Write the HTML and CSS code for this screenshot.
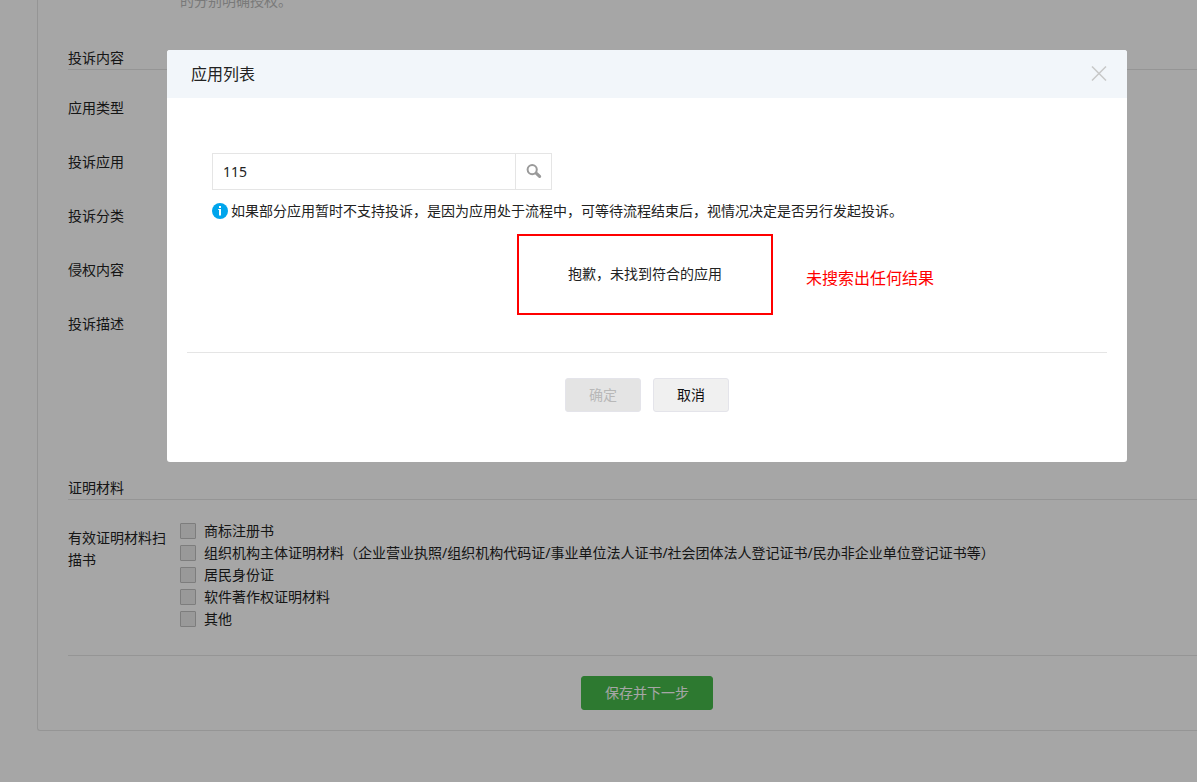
FILE: index.html
```html
<!DOCTYPE html>
<html lang="zh-CN">
<head>
<meta charset="utf-8">
<title>应用列表</title>
<link rel="stylesheet" href="styles.css">
</head>
<body>
<main class="panel">
  <p class="hint">的分别明确授权。</p>

  <section class="section">
    <h2 class="section-title">投诉内容</h2>
    <div class="rows">
      <div class="row">应用类型</div>
      <div class="row">投诉应用</div>
      <div class="row">投诉分类</div>
      <div class="row">侵权内容</div>
      <div class="row row-tall">投诉描述</div>
    </div>
  </section>

  <section class="section">
    <h2 class="section-title">证明材料</h2>
    <div class="proof">
      <div class="proof-label" id="proof-label">有效证明材料扫描书</div>
      <div class="checks" role="group" aria-labelledby="proof-label">
        <label class="check"><input class="check-box" type="checkbox">商标注册书</label>
        <label class="check"><input class="check-box" type="checkbox">组织机构主体证明材料（企业营业执照/组织机构代码证/事业单位法人证书/社会团体法人登记证书/民办非企业单位登记证书等）</label>
        <label class="check"><input class="check-box" type="checkbox">居民身份证</label>
        <label class="check"><input class="check-box" type="checkbox">软件著作权证明材料</label>
        <label class="check"><input class="check-box" type="checkbox">其他</label>
      </div>
    </div>
  </section>

  <div class="page-actions">
    <button class="btn btn-primary" type="button">保存并下一步</button>
  </div>
</main>

<div class="overlay">
  <div class="dialog" role="dialog" aria-modal="true" aria-labelledby="dialog-title">
    <header class="dialog-head">
      <h1 class="dialog-title" id="dialog-title">应用列表</h1>
      <button class="close" type="button" aria-label="关闭">
        <svg width="16" height="16" viewBox="0 0 16 16" fill="none" stroke="#c8c8c8" stroke-width="1.5"><path d="M1 .5l14 14M15 .5L1 14.5"/></svg>
      </button>
    </header>
    <div class="dialog-body">
      <form class="search">
        <input class="search-input" type="text" value="115" aria-label="搜索应用">
        <button class="search-btn" type="button" aria-label="搜索">
          <svg width="16" height="16" viewBox="0 0 16 16" fill="none" stroke="#9a9a9a"><circle cx="6.2" cy="5.6" r="4.6" stroke-width="2"/><path d="M10.4 9.4l3.2 3" stroke-width="3.2" stroke-linecap="round"/></svg>
        </button>
      </form>
      <p class="notice">
        <svg class="notice-icon" width="16" height="16" viewBox="0 0 16 16"><circle cx="8" cy="8" r="8" fill="#00a5ec"/><path d="M7 3h2v2H7zM6.2 6H9v6.5H7V7h-.8z" fill="#fff"/></svg>
        <span>如果部分应用暂时不支持投诉，是因为应用处于流程中，可等待流程结束后，视情况决定是否另行发起投诉。</span>
      </p>
      <div class="result">
        <p class="empty">抱歉，未找到符合的应用</p>
        <p class="remark">未搜索出任何结果</p>
      </div>
    </div>
    <footer class="dialog-foot">
      <button class="btn btn-disabled" type="button" disabled>确定</button>
      <button class="btn btn-plain" type="button">取消</button>
    </footer>
  </div>
</div>
</body>
</html>
```
FILE: styles.css
```css
* {
  box-sizing: border-box;
}

body {
  margin: 0;
  min-height: 100vh;
  overflow: hidden;
  background: #fff;
  color: #222;
  font: 14px/22px "Noto Sans", "Noto Sans CJK SC", sans-serif;
}

h1, h2, p {
  margin: 0;
  font-weight: 400;
}

button, input {
  font: inherit;
}

/* form page */
.panel {
  margin: -10px 0 0 37px;
  padding: 0 0 20px 30px;
  border: solid #e5e5e5;
  border-width: 0 0 1px 1px;
  border-radius: 0 0 0 3px;
}

.hint {
  padding: 0 0 35px 112px;
  color: #bbb;
}

.section-title {
  border-bottom: 1px solid #e5e5e5;
  font-size: 14px;
}

.rows {
  display: grid;
  gap: 32px;
  padding-top: 27px;
}

.row-tall {
  min-height: 164px;
}

.proof {
  display: flex;
  gap: 14px;
  padding: 20px 0 25px;
}

.proof-label {
  flex: none;
  width: 98px;
  padding-top: 7px;
}

.check {
  display: flex;
  align-items: center;
  gap: 8px;
}

.check-box {
  flex: none;
  appearance: none;
  width: 16px;
  height: 16px;
  margin: 0;
  border: 1px solid #c0c0c0;
  border-radius: 1px;
  background: #ececec;
}

.page-actions {
  display: flex;
  justify-content: center;
  padding: 20px 0 0 29px;
  border-top: 1px solid #e5e5e5;
}

.btn {
  min-width: 76px;
  height: 34px;
  padding: 0 23px;
  border: 1px solid #e4e4ea;
  border-radius: 3px;
}

.btn-primary {
  border-color: #46bb4b;
  background: #46bb4b;
  color: #fff;
}

.btn-disabled {
  background: #e4e4e4;
  color: #b8b8b8;
}

.btn-plain {
  background: #f0f0f0;
  color: #111;
}

/* dialog */
.overlay {
  position: fixed;
  inset: 0;
  display: flex;
  align-items: flex-start;
  justify-content: center;
  padding: 50px 0 0 97px;
  background: rgba(0, 0, 0, 0.35);
}

.dialog {
  width: 960px;
  max-width: 100%;
  overflow: hidden;
  border-radius: 3px;
  background: #fff;
}

.dialog-head {
  display: flex;
  align-items: center;
  justify-content: space-between;
  height: 48px;
  padding: 0 20px 0 24px;
  background: #f2f6fa;
}

.dialog-title {
  font-size: 16px;
}

.close {
  display: flex;
  padding: 0;
  border: 0;
  background: none;
}

.dialog-body {
  padding: 55px 49px 37px 45px;
}

.search {
  display: flex;
  width: 340px;
  height: 37px;
  border: 1px solid #e5e5e5;
}

.search-input {
  flex: 1;
  min-width: 0;
  padding: 0 10px;
  border: 0;
  background: none;
  color: #222;
}

.search-btn {
  display: flex;
  align-items: center;
  justify-content: center;
  width: 36px;
  padding: 0;
  border: 0;
  border-left: 1px solid #e5e5e5;
  background: none;
}

.notice {
  display: flex;
  align-items: center;
  gap: 3px;
  padding-top: 10px;
}

.notice-icon {
  flex: none;
}

.result {
  display: grid;
  grid-template-columns: 1fr auto 1fr;
  align-items: center;
  gap: 33px;
  padding-top: 12px;
}

.empty {
  grid-column: 2;
  height: 81px;
  padding: 27px 49px;
  border: 2px solid #f00;
}

.remark {
  padding-top: 6px;
  color: #f00;
  font-size: 16px;
}

.dialog-foot {
  display: flex;
  justify-content: center;
  gap: 12px;
  margin: 0 20px;
  padding: 25px 0 50px;
  border-top: 1px solid #e5e5e5;
}
```
